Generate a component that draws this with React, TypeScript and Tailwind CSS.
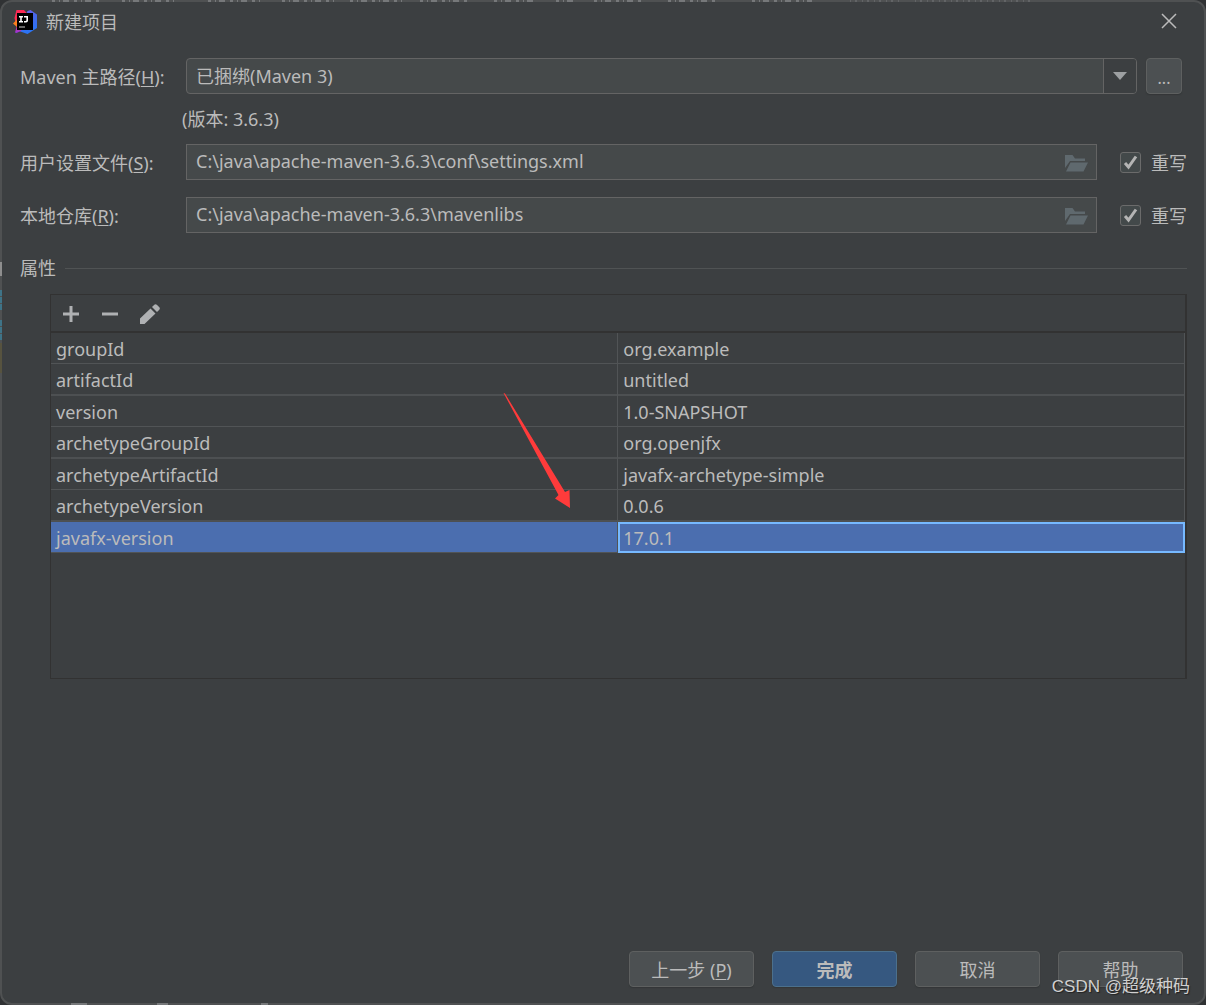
import { useState } from 'react';

const properties = [
  { name: 'groupId', value: 'org.example' },
  { name: 'artifactId', value: 'untitled' },
  { name: 'version', value: '1.0-SNAPSHOT' },
  { name: 'archetypeGroupId', value: 'org.openjfx' },
  { name: 'archetypeArtifactId', value: 'javafx-archetype-simple' },
  { name: 'archetypeVersion', value: '0.0.6' },
  { name: 'javafx-version', value: '17.0.1' },
];

function IdeaLogo() {
  return (
    <svg width="24" height="24" viewBox="0 0 24 24" aria-hidden="true">
      <defs>
        <linearGradient id="logo-left" x1="0" y1="0" x2="0" y2="1">
          <stop offset="0" stopColor="#fe2857" />
          <stop offset="0.4" stopColor="#fc2f50" />
          <stop offset="0.75" stopColor="#d0359a" />
          <stop offset="1" stopColor="#9135e0" />
        </linearGradient>
        <linearGradient id="logo-right" x1="0" y1="0" x2="0.3" y2="1">
          <stop offset="0" stopColor="#7a5cf0" />
          <stop offset="0.4" stopColor="#4a66e8" />
          <stop offset="1" stopColor="#2a74f5" />
        </linearGradient>
      </defs>
      <path d="M14.500 1 17.500 0 24 4.500V18l-9.500 6L6 21z" fill="url(#logo-right)" />
      <path d="M3.500 0 11 0l3.500 4L8 21l-4.500 2L2 22.500 3.500 17 1.500 8z" fill="url(#logo-left)" />
      <path d="M4 9.500 0 13.500 4 17z" fill="#fc801d" />
      <rect x="4" y="3" width="16" height="17" fill="#000" />
      <path d="M6 6h4v1.500H8.800v3.500H10v1.500H6V11h1.200V7.500H6zM11 6h4v4.500q0 2-2 2h-2V11h1.600q.8 0 .8-.8V7.500H11z" fill="#fff" />
      <path d="M6 17h6" stroke="#aaa" strokeWidth="1.200" />
    </svg>
  );
}

function FolderButton({ label }: { label: string }) {
  return (
    <button type="button" aria-label={label} className="flex h-full w-10 shrink-0 items-center justify-center pt-0.5">
      <svg width="24" height="18" viewBox="0 0 24 18" fill="#5f696e">
        <path d="M1 14V1h7.500l2.500 3.500h10v2.500H6L1 14z" />
        <path d="M6.500 8.500H24L19.500 17.500H2z" />
      </svg>
    </button>
  );
}

function PathRow({ id, text, hotkey, value, onChange }: { id: string; text: string; hotkey: string; value: string; onChange: (v: string) => void }) {
  const [override, setOverride] = useState(true);
  return (
    <div className="flex items-center">
      <label htmlFor={id} className="w-[166px] shrink-0 pt-0.5">
        {text}(<span className="underline underline-offset-2">{hotkey}</span>):
      </label>
      <div className="flex h-9 min-w-0 flex-1 items-center border border-[#646464] bg-[#45494a]">
        <input
          id={id}
          type="text"
          value={value}
          onChange={(e) => onChange(e.target.value)}
          className="h-full min-w-0 flex-1 bg-transparent pb-0.5 pl-[9px] outline-none"
        />
        <FolderButton label={`浏览${text}`} />
      </div>
      <label className="ml-[23px] flex shrink-0 items-center gap-2.5">
        <span className="grid size-[21px] place-items-center">
          <input
            type="checkbox"
            checked={override}
            onChange={(e) => setOverride(e.target.checked)}
            className="peer col-start-1 row-start-1 size-[21px] appearance-none rounded-[3px] border border-[#6b6b6b] bg-[#43494a]"
          />
          <svg width="15" height="15" viewBox="0 0 15 15" className="pointer-events-none invisible col-start-1 row-start-1 peer-checked:visible">
            <path d="M2 8 5.500 12 13 1.500" fill="none" stroke="#b4b4b4" strokeWidth="3" />
          </svg>
        </span>
        <span className="pt-0.5">重写</span>
      </label>
    </div>
  );
}

// parts of the editor window that show past the dialog's edges
function Backdrop() {
  return (
    <svg aria-hidden="true" className="absolute inset-0 h-full w-full">
      <path d="M52 1H100M122 1h54M208 1h54M282 1h52M350 1h54M420 1h50M494 1h44M556 1h20M594 1h50M668 1h48M752 1h60" stroke="#76787a" strokeWidth="2" strokeDasharray="3 4 1 3 6 5" />
      <path d="M850 1h50M915 1h120" stroke="#626466" strokeWidth="2" strokeDasharray="1 4 2 5" />
      <path d="M71 1004h16M157 1004h11M261 1004h7" stroke="#76787a" strokeWidth="2" />
      <path d="M1 262v14" stroke="#8e8e8e" strokeWidth="2" />
      <path d="M1 290v21M1 320v21" stroke="#3f7488" strokeWidth="2" strokeDasharray="6 1" />
      <path d="M1 343v30" stroke="#57533f" strokeWidth="2" />
    </svg>
  );
}

const buttonClass = 'h-9 w-[125px] rounded-[4px] border border-[#5e6060] bg-[#4c5052] pt-0.5 shadow-[0_1px_1px_#333638]';

export default function App() {
  const [home, setHome] = useState('bundled');
  const [settings, setSettings] = useState('C:\\java\\apache-maven-3.6.3\\conf\\settings.xml');
  const [repository, setRepository] = useState('C:\\java\\apache-maven-3.6.3\\mavenlibs');
  const [selected, setSelected] = useState(6);

  return (
    <div className="relative flex min-h-screen flex-col bg-[#303234] font-['Noto_Sans','Noto_Sans_CJK_SC',sans-serif] text-[18px] leading-6 text-[#bbbbbb]">
      <div className="relative flex flex-1 flex-col rounded-[12px] border-2 border-[#4f5152] bg-[#3c3f41]">
        {/* Title bar */}
        <header className="flex h-10 items-center pr-[23px] pl-[11px]">
          <IdeaLogo />
          <h1 className="ml-[9px] flex-1">新建项目</h1>
          <button type="button" aria-label="关闭" className="flex size-6 items-center justify-center pb-0.5">
            <svg width="16" height="16" viewBox="0 0 16 16" stroke="#bbbbbb" strokeWidth="1.500">
              <path d="M1 1l14 14M15 1 1 15" />
            </svg>
          </button>
        </header>

        <main className="flex flex-1 flex-col pt-4 pr-[17px] pl-[18px]">
          <div className="flex items-center pr-[5px]">
            <label htmlFor="maven-home" className="w-[166px] shrink-0 pt-0.5">
              Maven 主路径(<span className="underline underline-offset-2">H</span>):
            </label>
            <div className="relative min-w-0 flex-1">
              <select
                id="maven-home"
                value={home}
                onChange={(e) => setHome(e.target.value)}
                className="block h-9 w-full appearance-none rounded-[4px] border border-[#646464] bg-[#45494a] pl-[9px] outline-none"
              >
                <option value="bundled">已捆绑(Maven 3)</option>
              </select>
              <span className="pointer-events-none absolute inset-y-px right-px flex w-[33px] items-center justify-center rounded-r-[3px] border-l border-[#646464] bg-[#3c3f41]">
                <svg width="14" height="8" viewBox="0 0 14 8" fill="#9da0a2">
                  <path d="M0 0h14L7 8z" />
                </svg>
              </span>
            </div>
            <button type="button" aria-label="浏览" className="ml-[9px] h-9 w-9 rounded-[4px] border border-[#5e6060] bg-[#4c5052] pt-1 text-[16px] shadow-[0_1px_1px_#333638]">
              ...
            </button>
          </div>
          <p className="mt-[13px] pl-[162px]">(版本: 3.6.3)</p>

          <div className="mt-[13px] flex flex-col gap-[17px]">
            <PathRow id="settings-file" text="用户设置文件" hotkey="S" value={settings} onChange={setSettings} />
            <PathRow id="local-repo" text="本地仓库" hotkey="R" value={repository} onChange={setRepository} />
          </div>

          {/* Properties */}
          <section className="mt-[23px]">
            <div className="flex items-center gap-[9px]">
              <h2>属性</h2>
              <span className="h-px flex-1 bg-[#505354]" />
            </div>
            <div className="mt-3.5 ml-[30px] flex h-[385px] flex-col border border-r-2 border-[#323232]">
              <div className="flex h-[38px] shrink-0 items-center gap-[15px] border-b-2 border-[#323232] pt-0.5 pl-2">
                <button type="button" aria-label="添加" className="flex size-6 items-center justify-center">
                  <svg width="16" height="16" viewBox="0 0 16 16" fill="#afb1b3">
                    <path d="M6.500 0h3v6.500H16v3H9.500V16h-3V9.500H0v-3h6.500z" />
                  </svg>
                </button>
                <button type="button" aria-label="移除" className="flex size-6 items-center justify-center">
                  <svg width="16" height="16" viewBox="0 0 16 16" fill="#afb1b3">
                    <path d="M0 6.500h16v3H0z" />
                  </svg>
                </button>
                <button type="button" aria-label="编辑" className="flex size-6 items-center justify-end">
                  <svg width="22" height="20" viewBox="0 0 22 20" fill="#afb1b3">
                    <path d="M1 14.500 11.500 4.500l5 5L5.500 20H1zM13 3 15.300.8q1.200-1.100 2.500 0l2.500 2.500q1.100 1.200 0 2.400L18 8z" />
                  </svg>
                </button>
              </div>
              <table className="w-full table-fixed border-collapse text-left">
                <tbody>
                  {properties.map((p, i) => (
                    <tr
                      key={p.name}
                      onClick={() => setSelected(i)}
                      className={
                        i === selected
                          ? 'h-[31px] bg-[#4b6eaf] shadow-[inset_0_-1px_#515456]'
                          : i % 2
                            ? 'h-8 shadow-[inset_0_-2px_#4d5052]'
                            : 'h-[31px] shadow-[inset_0_-1px_#515456]'
                      }
                    >
                      <td className="border-r border-[#515456] p-0 pl-[5px]">{p.name}</td>
                      <td
                        className={
                          i === selected
                            ? 'border-r border-[#515456] p-0 pl-[5px] outline-2 -outline-offset-2 outline-[#76b9ff]'
                            : 'border-r border-[#515456] p-0 pl-[5px]'
                        }
                      >
                        {p.value}
                      </td>
                    </tr>
                  ))}
                </tbody>
              </table>
            </div>
          </section>

          <footer className="mt-auto flex justify-end gap-[18px] pr-1 pb-4">
            <button type="button" className={buttonClass}>
              上一步 (<span className="underline underline-offset-2">P</span>)
            </button>
            <button type="button" className="h-9 w-[125px] rounded-[4px] border border-[#4c708c] bg-[#365880] pt-0.5 font-bold shadow-[0_1px_1px_#333638]">
              完成
            </button>
            <button type="button" className={buttonClass}>取消</button>
            <button type="button" className={buttonClass}>帮助</button>
          </footer>
        </main>
      </div>
      <Backdrop />

      {/* Pointer to the selected row */}
      <svg width="68" height="116" viewBox="0 0 68 116" fill="#ff3b3b" className="pointer-events-none absolute top-[393px] left-[503px]" aria-hidden="true">
        <path d="M0.500 0 2 0.500 62 99l4.500-2 0.500 18-15-9.500 3.500-3.500z" />
      </svg>
      <span className="pointer-events-none absolute right-4 bottom-1.5 font-['Liberation_Sans','Noto_Sans_CJK_SC',sans-serif] text-[17px] text-[#d0d0d0] [text-shadow:1px_1px_1px_#222]">
        CSDN @超级种码
      </span>
    </div>
  );
}
